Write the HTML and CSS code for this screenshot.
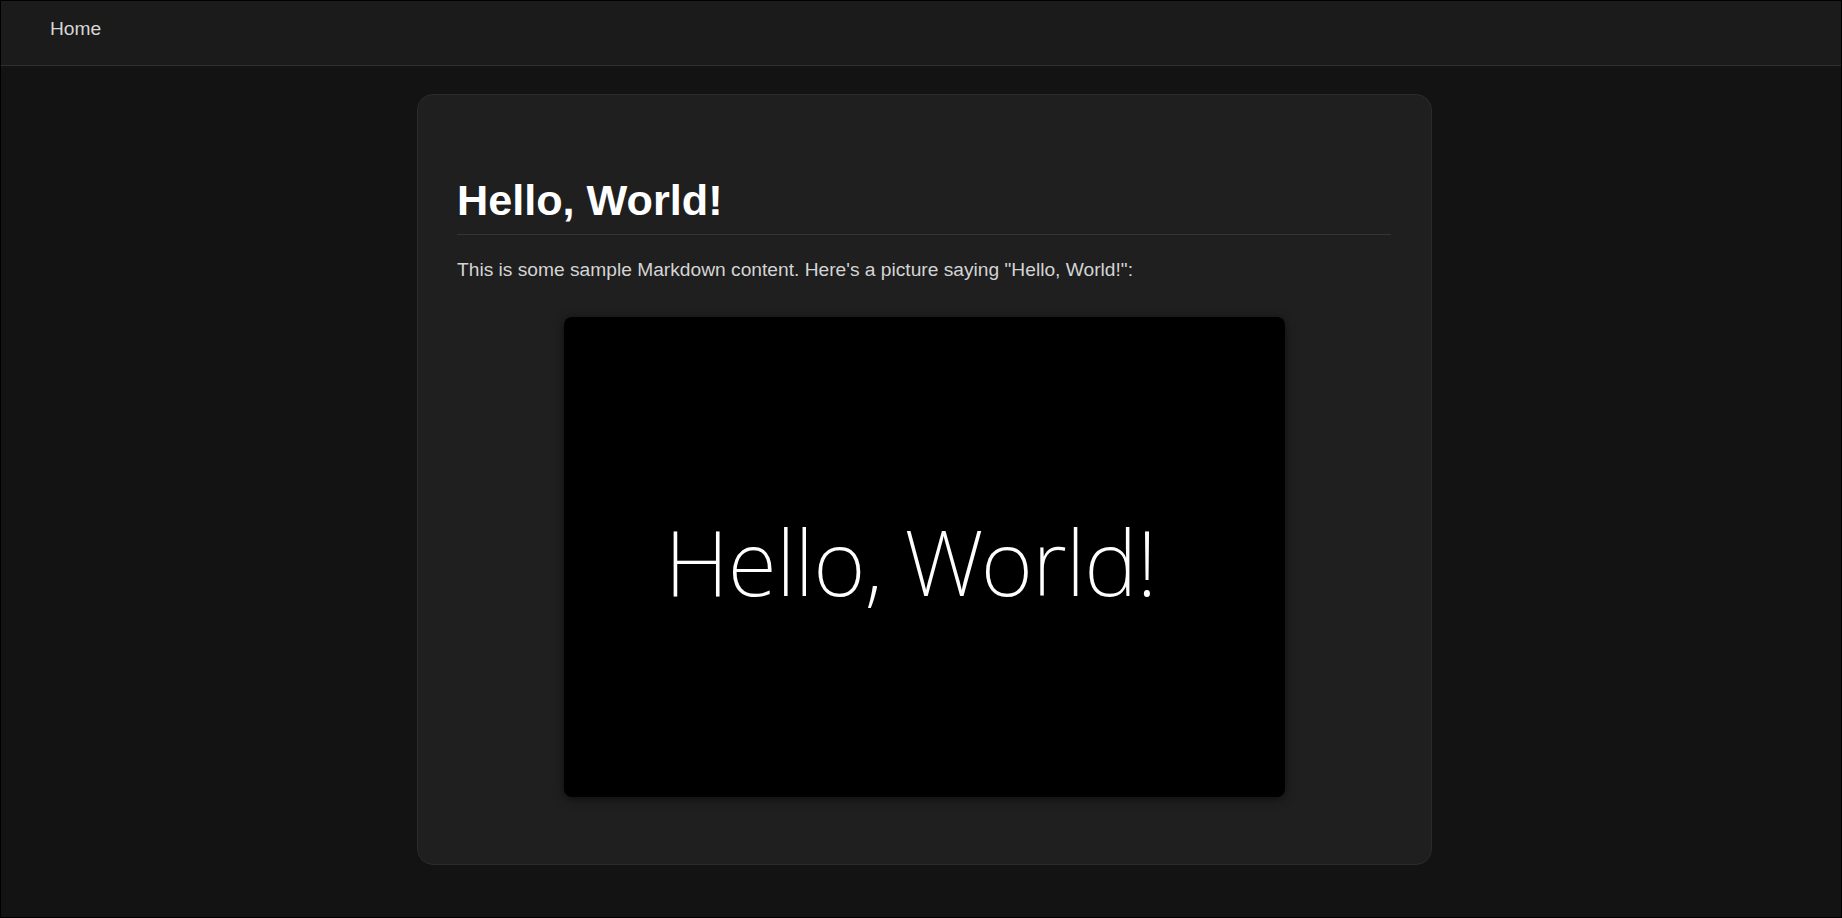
FILE: index.html
```html
<!DOCTYPE html>
<html lang="en">
<head>
<meta charset="utf-8">
<title>Hello, World!</title>
<link rel="stylesheet" href="styles.css">
</head>
<body>
<div class="frame">
  <nav class="topnav">
    <a class="nav-link" href="#">Home</a>
  </nav>
  <main class="main">
    <article class="card">
      <h1 class="title">Hello, World!</h1>
      <p class="lead">This is some sample Markdown content. Here's a picture saying "Hello, World!":</p>
      <div class="picture" role="img" aria-label="Hello, World!">
        <span class="picture-text">Hello, World!</span>
      </div>
    </article>
  </main>
</div>
</body>
</html>
```
FILE: styles.css
```css
html, body {
  margin: 0;
  padding: 0;
  background: #000;
}
.frame {
  box-sizing: border-box;
  height: 918px;
  border: 1px solid #000;
  background: #131313;
  font-family: "Liberation Sans", Arial, sans-serif;
  font-size: 19.2px;
  overflow: hidden;
}
.topnav {
  box-sizing: border-box;
  height: 65px;
  padding: 17px 49px 0;
  background: #1b1b1b;
  border-bottom: 1px solid #2f2f2f;
  display: flex;
  align-items: flex-start;
}
.nav-link {
  color: #d6d6d6;
  text-decoration: none;
  font-size: 19.2px;
  line-height: 22px;
}
.main {
  display: flex;
  justify-content: center;
  padding: 28px 0 0 7px;
}
.card {
  box-sizing: border-box;
  width: 1015px;
  padding: 79px 40px 40px 39px;
  background: #1f1f1f;
  border: 1px solid #2b2b2b;
  border-radius: 16px;
}
.title {
  margin: 0;
  padding-bottom: 8px;
  border-bottom: 1px solid #343434;
  color: #fff;
  font-size: 43.2px;
  line-height: 52px;
  font-weight: 700;
}
.lead {
  margin: 20px 0 0;
  color: #d4d4d4;
  font-size: 19.2px;
  line-height: 30.72px;
}
.picture {
  box-sizing: border-box;
  width: 721px;
  height: 480px;
  margin: 31px auto 27px;
  padding: 199px 0 0 101px;
  background: #000;
  border-radius: 8px;
  box-shadow: 0 2px 10px rgba(0, 0, 0, 0.55);
}
.picture-text {
  display: block;
  color: #fff;
  font-family: "Noto Sans", sans-serif;
  font-weight: 180;
  font-size: 90px;
  line-height: 90px;
  letter-spacing: -0.9px;
  white-space: nowrap;
}
```
